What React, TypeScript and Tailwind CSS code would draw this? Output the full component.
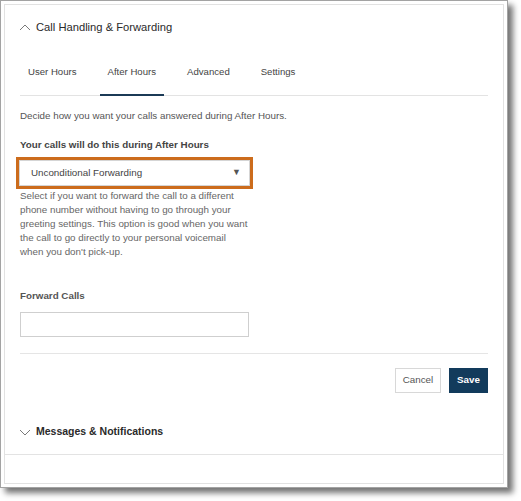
const TABS = ['User Hours', 'After Hours', 'Advanced', 'Settings']

function Chevron({ up }: { up?: boolean }) {
  return (
    <svg width="12" height="7" viewBox="0 0 12 7" className="mr-[5px] shrink-0">
      <polyline
        points={up ? '1,6 6,1 11,6' : '1,1 6,6 11,1'}
        fill="none"
        stroke="#7a7a7a"
        strokeWidth="1"
      />
    </svg>
  )
}

export default function App() {
  return (
    <div className="w-[521px] h-[501px] bg-white" style={{ fontFamily: "'Liberation Sans', Arial, sans-serif" }}>
      {/* screenshot frame */}
      <div className="w-[508px] h-[488px] bg-white border border-[#a3a3a3] p-[3px] shadow-[5px_5px_6px_rgba(0,0,0,0.55)]">
        <div className="h-full border border-[#e2e2e2] flex flex-col">
          {/* Section header */}
          <div className="h-[44px] flex items-center pl-[14px] text-[#2a2a2a]">
            <Chevron up />
            <span className="text-[11.2px]">Call Handling &amp; Forwarding</span>
          </div>

          <div className="px-[15px]">
            {/* Tabs */}
            <div className="flex gap-[15px] border-b border-[#e3e3e3] h-[47px]">
              {TABS.map((t) => (
                <div
                  key={t}
                  className={
                    'px-2 flex items-center text-[9.6px] text-[#444] ' +
                    (t === 'After Hours' ? 'border-b-2 border-[#1b3a56] mb-[-1px] pt-[2px]' : '')
                  }
                >
                  {t}
                </div>
              ))}
            </div>

            <p className="mt-[13px] text-[9.8px] leading-[14px] text-[#555]">
              Decide how you want your calls answered during After Hours.
            </p>

            <p className="mt-[15px] text-[9.8px] leading-[14px] font-bold text-[#444]">
              Your calls will do this during After Hours
            </p>

            {/* Select with highlight */}
            <div className="mt-[5px] -ml-[4px] w-[237px] h-[32px] border-[3px] border-[#cc6c1c]">
              <div className="h-full border border-[#d5d5d5] flex items-center justify-between pl-[11px] pr-[8px]">
                <span className="text-[9.8px] text-[#444]">Unconditional Forwarding</span>
                <span className="text-[9px] text-[#555]">▼</span>
              </div>
            </div>

            <p className="w-[229.5px] text-[9.8px] leading-[14px] text-[#666]">
              Select if you want to forward the call to a different phone number without having to go through your
              greeting settings. This option is good when you want the call to go directly to your personal voicemail
              when you don't pick-up.
            </p>

            <p className="mt-[30px] text-[9.8px] leading-[14px] font-bold text-[#555]">Forward Calls</p>
            <div className="mt-[9px] w-[229px] h-[25px] border border-[#cfcfcf]" />

            <div className="mt-[16px] border-t border-[#e5e5e5]" />

            <div className="mt-[14px] flex justify-end gap-[8px]">
              <button className="w-[46px] h-[25px] border border-[#d8d8d8] text-[9.8px] text-[#555]">Cancel</button>
              <button className="w-[39px] h-[25px] bg-[#123b5c] text-[9.8px] font-bold text-white">Save</button>
            </div>
          </div>

          {/* Collapsed section */}
          <div className="mt-[17px] h-[45px] flex items-center pl-[14px] border-b border-[#e3e3e3] text-[#2a2a2a]">
            <Chevron />
            <span className="text-[10.5px] font-bold">Messages &amp; Notifications</span>
          </div>
        </div>
      </div>
    </div>
  )
}
